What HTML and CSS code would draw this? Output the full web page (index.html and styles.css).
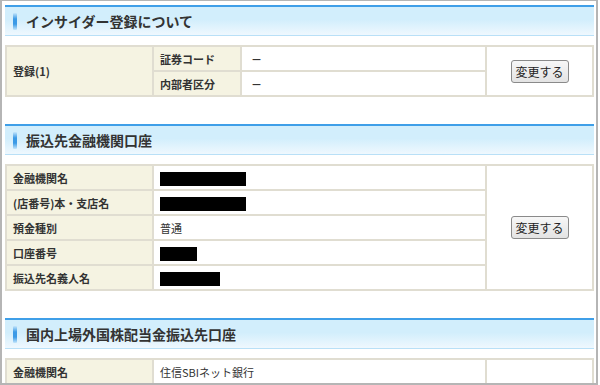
FILE: index.html
```html
<!DOCTYPE html>
<html lang="ja">
<head>
    <meta charset="UTF-8">
    <title>登録情報</title>
    <link rel="stylesheet" href="styles.css">
</head>
<body>
    <div class="frame">
        <h2 class="section-title"><span class="mark"></span>インサイダー登録について</h2>
        <table class="info">
            <colgroup>
                <col class="c-label"><col class="c-sub"><col><col class="c-btn">
            </colgroup>
            <tr>
                <th rowspan="2">登録(1)</th>
                <th>証券コード</th>
                <td class="dash">－</td>
                <td rowspan="2" class="btn-cell"><button class="change-btn">変更する</button></td>
            </tr>
            <tr>
                <th>内部者区分</th>
                <td class="dash">－</td>
            </tr>
        </table>

        <h2 class="section-title"><span class="mark"></span>振込先金融機関口座</h2>
        <table class="info">
            <colgroup>
                <col class="c-label"><col><col class="c-btn">
            </colgroup>
            <tr>
                <th>金融機関名</th>
                <td><span class="mask" style="width: 86px;"></span></td>
                <td rowspan="5" class="btn-cell"><button class="change-btn">変更する</button></td>
            </tr>
            <tr>
                <th>(店番号)本・支店名</th>
                <td><span class="mask" style="width: 86px;"></span></td>
            </tr>
            <tr>
                <th>預金種別</th>
                <td>普通</td>
            </tr>
            <tr>
                <th>口座番号</th>
                <td><span class="mask" style="width: 37px;"></span></td>
            </tr>
            <tr>
                <th>振込先名義人名</th>
                <td><span class="mask" style="width: 60px;"></span></td>
            </tr>
        </table>

        <h2 class="section-title"><span class="mark"></span>国内上場外国株配当金振込先口座</h2>
        <table class="info">
            <colgroup>
                <col class="c-label"><col><col class="c-btn">
            </colgroup>
            <tr>
                <th>金融機関名</th>
                <td>住信SBIネット銀行</td>
                <td rowspan="3" class="btn-cell"></td>
            </tr>
            <tr>
                <th></th>
                <td></td>
            </tr>
            <tr>
                <th></th>
                <td></td>
            </tr>
        </table>
    </div>
</body>
</html>
```

FILE: styles.css
```css
body {
    margin: 0;
    background-color: #fff;
    color: #333;
    font-family: "Noto Sans CJK JP", "Noto Sans", sans-serif;
}
.frame {
    width: 598px;
    height: 385px;
    box-sizing: border-box;
    border: 2px solid #b5b5b5;
    border-top-width: 1px;
    padding: 4px 2px 0 3px;
    overflow: hidden;
}
.section-title {
    display: flex;
    align-items: center;
    height: 28px;
    margin: 27px 0 0;
    padding-left: 8px;
    border-top: 2px solid #3f9fe8;
    border-bottom: 1px solid #b9e0f7;
    background: linear-gradient(#d2eefc 0%, #d2eefc 45%, #eff8fe 100%);
    font-size: 14px;
    font-weight: bold;
    color: #333;
}
.section-title:first-child {
    margin-top: 0;
}
.mark {
    width: 4px;
    height: 17px;
    margin-right: 9px;
    border-radius: 1px;
    background: linear-gradient(#c4e6fb, #3b9ae6 35%, #3b9ae6 65%, #c4e6fb);
}
.info {
    width: 100%;
    margin-top: 9px;
    border-collapse: collapse;
    table-layout: fixed;
    font-size: 11px;
}
.c-label {
    width: 147px;
}
.c-sub {
    width: 88px;
}
.c-btn {
    width: 107px;
}
.info tr {
    height: 25px;
}
.info th,
.info td {
    border: 2px solid #e0ddd1;
    padding: 0 6px;
    text-align: left;
    white-space: nowrap;
}
.info th {
    background-color: #f5f3e2;
    font-weight: bold;
}
.info td {
    background-color: #fff;
}
.info td.dash {
    padding-left: 9px;
    font-weight: bold;
}
.btn-cell {
    text-align: center !important;
}
.mask {
    display: inline-block;
    height: 14px;
    vertical-align: middle;
    background-color: #000;
}
.change-btn {
    width: 58px;
    height: 23px;
    padding: 0;
    border: 1px solid #8a8a8a;
    border-radius: 3px;
    background: linear-gradient(#f7f7f7, #e3e3e3);
    font-family: inherit;
    font-size: 12px;
    color: #222;
}
```
